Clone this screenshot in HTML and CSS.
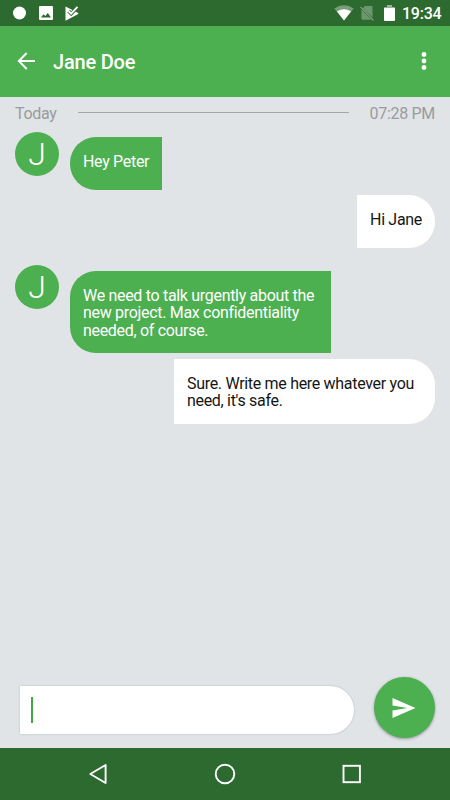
FILE: index.html
```html
<!DOCTYPE html>
<html lang="en">
<head>
    <meta charset="UTF-8">
    <meta name="viewport" content="width=device-width, initial-scale=1.0">
    <title>Jane Doe</title>
    <link rel="stylesheet" href="styles.css">
</head>
<body>

<div class="screen">
    <div class="status-bar">
        <div class="status-left">
            <svg width="14" height="14" viewBox="0 0 14 14"><circle cx="6.500" cy="7" r="6.500" fill="#fff"/></svg>
            <svg width="14" height="14" viewBox="0 0 14 14"><path fill="#fff" fill-rule="evenodd" d="M1 0h12a1 1 0 0 1 1 1v12a1 1 0 0 1-1 1H1a1 1 0 0 1-1-1V1a1 1 0 0 1 1-1zM2 11.500h10L8.800 7 6.300 10 4.500 8.200z"/></svg>
            <svg width="14" height="15" viewBox="0 0 14 15"><path fill="#fff" d="M.5.5l12.300 6.200q1.300.8 0 1.600L.5 14.700z"/><path fill="none" stroke="#2d6a2f" stroke-width="3.600" d="M3.500 5l2.700 2.700L13 .8"/><path fill="none" stroke="#fff" stroke-width="1.900" d="M3.200 4.700l2.900 2.900L12.500.9"/></svg>
        </div>
        <div class="status-right">
            <svg class="wifi" width="20" height="16" viewBox="0 0 20 16"><path fill="#fff" opacity=".35" d="M10 15.500L.3 3.400Q10-3 19.700 3.400z"/><path fill="#fff" d="M10 15.500L3 6.600Q10 1.800 17 6.600z"/></svg>
            <svg class="sim" width="14" height="16" viewBox="0 0 14 16"><path fill="#fff" opacity=".3" d="M5 1h6.500a1 1 0 0 1 1 1v10.500L2.800 3.200zM1.500 4.500L11.500 14.700H2.500a1 1 0 0 1-1-1z"/><path fill="none" stroke="#fff" opacity=".4" stroke-width="1.200" d="M.5 1.800l13 13.500"/></svg>
            <svg class="battery" width="11" height="16" viewBox="0 0 11 16"><path fill="#fff" opacity=".5" d="M3 0h5v2h2a1 1 0 0 1 1 1H0a1 1 0 0 1 1-1h2z"/><path fill="#fff" d="M0 3h11v12a1 1 0 0 1-1 1H1a1 1 0 0 1-1-1z"/></svg>
            <span class="clock">19:34</span>
        </div>
    </div>

    <header class="toolbar">
        <svg class="back-icon" width="18" height="18" viewBox="0 0 18 18"><path fill="none" stroke="#fff" stroke-width="2" d="M9.700 1L1.800 9l7.900 8M1.800 9H18"/></svg>
        <h1 class="title">Jane Doe</h1>
        <svg class="more-icon" width="6" height="18" viewBox="0 0 6 18"><g fill="#fff"><circle cx="3" cy="2.500" r="2.400"/><circle cx="3" cy="9" r="2.400"/><circle cx="3" cy="15.500" r="2.400"/></g></svg>
    </header>

    <main class="chat">
        <div class="date-row">
            <span class="day">Today</span>
            <span class="line"></span>
            <span class="time">07:28 PM</span>
        </div>

        <div class="message received">
            <span class="avatar">J</span>
            <p class="bubble">Hey Peter</p>
        </div>
        <div class="message sent">
            <p class="bubble">Hi Jane</p>
        </div>
        <div class="message received second">
            <span class="avatar">J</span>
            <p class="bubble">We need to talk urgently about the new project. Max confidentiality needed, of course.</p>
        </div>
        <div class="message sent">
            <p class="bubble">Sure. Write me here whatever you need, it's safe.</p>
        </div>
    </main>

    <div class="composer">
        <div class="input"><span class="caret"></span></div>
        <button class="send" type="button" aria-label="Send">
            <svg width="24" height="20" viewBox="0 0 24 20"><path fill="#fff" d="M.5 0L23.500 10 .5 20v-7.600L15.500 10 .5 7.600z"/></svg>
        </button>
    </div>

    <nav class="nav-bar">
        <svg width="20" height="22" viewBox="0 0 20 22"><path fill="none" stroke="#fff" stroke-width="1.900" stroke-linejoin="round" d="M17.600 2v18L2.300 11z"/></svg>
        <svg width="22" height="22" viewBox="0 0 22 22"><circle cx="11" cy="11" r="9.300" fill="none" stroke="#fff" stroke-width="1.900"/></svg>
        <svg width="20" height="20" viewBox="0 0 20 20"><rect x="2.500" y="1.800" width="16.400" height="16.400" fill="none" stroke="#fff" stroke-width="1.900"/></svg>
    </nav>
</div>

</body>
</html>
```

FILE: styles.css
```css
* {
    box-sizing: border-box;
}

body {
    margin: 0;
    font-family: Roboto, "Liberation Sans", sans-serif;
    background-color: #e0e4e7;
}

svg {
    display: block;
    flex-shrink: 0;
}

.screen {
    display: flex;
    flex-direction: column;
    width: 450px;
    height: 800px;
    overflow: hidden;
}

.status-bar {
    display: flex;
    justify-content: space-between;
    align-items: center;
    height: 26px;
    padding: 0 8.5px 0 13px;
    background-color: #2d6a2f;
}

.status-left {
    display: flex;
    align-items: center;
    gap: 12px;
}

.status-right {
    display: flex;
    align-items: center;
}

.sim {
    margin-left: 6px;
}

.battery {
    margin-left: 10px;
}

.clock {
    margin-left: 7px;
    padding-top: 2px;
    color: #fff;
    font-size: 16px;
    font-weight: 500;
    letter-spacing: -0.2px;
    line-height: 18px;
}

.toolbar {
    display: flex;
    align-items: center;
    height: 70.5px;
    padding: 0 23px 0 17px;
    background-color: #4caf50;
}

.title {
    flex: 1;
    margin: 2px 0 0 18px;
    color: #fff;
    font-size: 20px;
    font-weight: 500;
    letter-spacing: -0.2px;
    line-height: 24px;
}

.chat {
    flex: 1;
    padding: 7.5px 15px 0;
}

.date-row {
    display: flex;
    align-items: center;
    height: 18px;
    color: #999b9d;
    font-size: 16px;
    letter-spacing: -0.3px;
}

.day {
    width: 63px;
}

.line {
    flex: 1;
    height: 1px;
    margin-bottom: 1px;
    background-color: #a3a7a9;
}

.time {
    margin-left: 21px;
}

.message {
    display: flex;
    align-items: flex-start;
}

.received {
    margin-top: 9.5px;
}

.received.second {
    margin-top: 17.5px;
}

.sent {
    justify-content: flex-end;
    margin-top: 5.5px;
}

.avatar {
    width: 44px;
    height: 44px;
    margin-right: 11px;
    border-radius: 50%;
    background-color: #4caf50;
    color: #fff;
    font-size: 32px;
    font-weight: 300;
    line-height: 44px;
    text-align: center;
}

.bubble {
    max-width: 261px;
    min-height: 52.5px;
    margin: 0;
    padding: 16px 13px 13.5px;
    font-size: 16px;
    letter-spacing: -0.31px;
    line-height: 17.7px;
}

.received .bubble {
    margin-top: 5.5px;
    border-radius: 26px 0 0 26px;
    background-color: #4caf50;
    color: #fff;
}

.sent .bubble {
    border-radius: 0 26px 26px 0;
    background-color: #fff;
    color: #151515;
}

.composer {
    display: flex;
    justify-content: space-between;
    align-items: flex-start;
    height: 71px;
    padding: 0 15.5px 0 19.5px;
}

.input {
    display: flex;
    align-items: center;
    width: 334px;
    height: 48px;
    margin-top: 9px;
    padding-left: 11px;
    border-radius: 0 24px 24px 0;
    background-color: #fff;
    box-shadow: 0 0 2px rgba(0, 0, 0, 0.22);
}

.caret {
    width: 2px;
    height: 26px;
    background-color: #3fa843;
}

.send {
    display: flex;
    align-items: center;
    justify-content: center;
    width: 61px;
    height: 61px;
    padding: 0;
    border: none;
    border-radius: 50%;
    background-color: #4caf50;
    box-shadow: 0 1px 3px rgba(0, 0, 0, 0.35);
}

.nav-bar {
    display: flex;
    justify-content: space-between;
    align-items: center;
    height: 52px;
    padding: 0 89px 0 88px;
    background-color: #2d6a2f;
}
```
